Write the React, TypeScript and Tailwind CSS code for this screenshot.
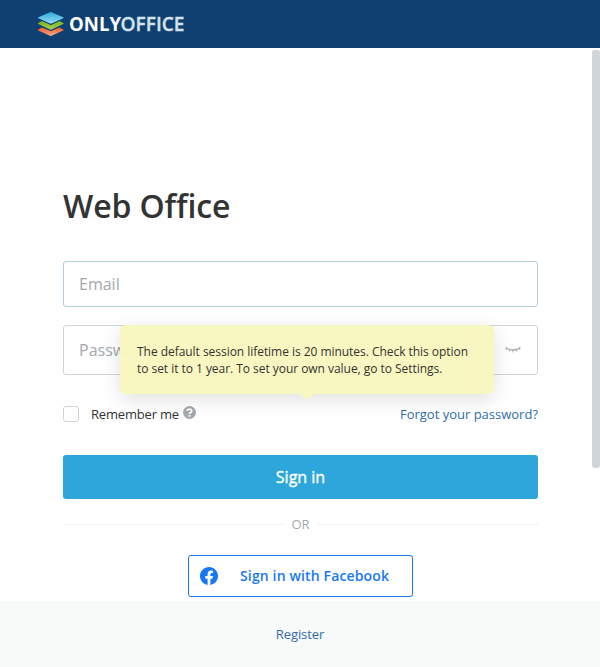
import React from "react";

function Logo() {
  return (
    <svg className="block" width="150" height="28" viewBox="0 0 150 28" role="img" aria-label="ONLYOFFICE">
      <defs>
        <linearGradient id="blueLayer" x1="0" y1="0" x2="0" y2="1">
          <stop offset="0" stopColor="#27a9dc" />
          <stop offset="1" stopColor="#9bdcf5" />
        </linearGradient>
        <linearGradient id="greenLayer" x1="0" y1="0" x2="0" y2="1">
          <stop offset="0" stopColor="#77b51a" />
          <stop offset="1" stopColor="#a9d052" />
        </linearGradient>
        <linearGradient id="redLayer" x1="0" y1="0" x2="0" y2="1">
          <stop offset="0" stopColor="#ee5b2b" />
          <stop offset="1" stopColor="#f3ab8c" />
        </linearGradient>
      </defs>
      <path d="M.4 19.500 4 17.500l8 3.300q.8.400 1.600 0l8-3.300 3.600 2q.8.500 0 .9L13.600 25.800q-.8.400-1.600 0L.4 20.400q-.8-.4 0-.9Z" fill="url(#redLayer)" />
      <path d="M.4 13 4 11l8 3.700q.8.400 1.600 0l8-3.700 3.600 2q.8.400 0 .9l-11.600 5.600q-.8.400-1.600 0L.4 13.900q-.8-.4 0-.9Z" fill="url(#greenLayer)" />
      <path d="M12 2.200q.8-.4 1.600 0l11.600 5.100q.8.400 0 .9l-11.600 5.200q-.8.400-1.600 0L.4 8.200q-.8-.5 0-.9Z" fill="url(#blueLayer)" />
      <g fontFamily="'Open Sans', sans-serif" fontSize="20" strokeLinejoin="round">
        <text x="31" y="21" fontWeight="700" fill="#fff" textLength="52" lengthAdjust="spacingAndGlyphs">ONLY</text>
        <text x="82.500" y="21" fontWeight="600" fill="#d3e3ea" stroke="#d3e3ea" strokeWidth=".35" textLength="64" lengthAdjust="spacingAndGlyphs">OFFICE</text>
      </g>
    </svg>
  );
}

function ClosedEye() {
  return (
    <svg className="block" width="16" height="8" viewBox="0 0 16 8" fill="none" stroke="#a3a9ae">
      <path d="M.5 1.500Q8 6.500 15.500 1.500" strokeWidth="1.300" />
      <path d="M2 2.200.8 4M5 3.500 4.300 5.600M8 4v2.500M11 3.500l.7 2.100M14 2.200 15.200 4" strokeWidth="1" />
    </svg>
  );
}

function HelpIcon() {
  return (
    <svg className="block" width="13" height="13" viewBox="0 0 13 13">
      <circle cx="6.500" cy="6.500" r="6.500" fill="#a3a9ae" />
      <path d="M4.300 5.100C4.300 2.500 8.700 2.500 8.700 5c0 1.500-2.200 1.600-2.200 3.100" fill="none" stroke="#fff" strokeWidth="1.700" />
      <path d="M5.600 9h1.800v1.700H5.600z" fill="#fff" />
    </svg>
  );
}

function FacebookIcon() {
  return (
    <svg className="block" width="18" height="18" viewBox="0 0 24 24" fill="#1877f2">
      <path d="M24 12.073C24 5.446 18.627.073 12 .073S0 5.446 0 12.073c0 5.990 4.388 10.954 10.125 11.854v-8.385H7.078v-3.470h3.047V9.430c0-3.007 1.792-4.669 4.533-4.669 1.312 0 2.686.235 2.686.235v2.953H15.830c-1.491 0-1.956.925-1.956 1.874v2.250h3.328l-.532 3.470h-2.796v8.385C19.612 23.027 24 18.063 24 12.073z" />
    </svg>
  );
}

function SessionTooltip() {
  return (
    <div role="tooltip" className="absolute left-[57px] top-[64px] h-[69px] w-[374px] rounded-md bg-[#f8f7bf]/97 px-[17px] pt-[18px] text-xs leading-[17px] tracking-[-0.04px] text-[#333] shadow-[0_5px_20px_rgba(0,0,0,0.13)]">
      <p className="whitespace-nowrap">The default session lifetime is 20 minutes. Check this option</p>
      <p className="whitespace-nowrap">to set it to 1 year. To set your own value, go to Settings.</p>
      <svg className="absolute left-[180px] top-[69px]" width="14" height="6" viewBox="0 0 14 6">
        <path d="M0 0h14L8 5Q7 6 6 5Z" fill="#f8f7bf" />
      </svg>
    </div>
  );
}

export default function App() {
  return (
    <div className="flex h-[667px] w-[600px] flex-col overflow-hidden bg-white font-['Open_Sans','Noto_Sans',sans-serif] text-[13px] text-[#333]">
      <header className="h-12 shrink-0 bg-[#0f4071] pl-[38px] pt-[10px]">
        <Logo />
      </header>
      <div className="flex h-[553px] shrink-0 justify-between">
        <main className="ml-[63px] w-[475px] pt-[135px]">
          <h1 className="h-[78px] text-[32px] font-semibold leading-[45px] tracking-[-0.12px]">Web Office</h1>
          <form className="relative" onSubmit={(event) => event.preventDefault()}>
            <input aria-label="Email" placeholder="Email" className="block h-[46px] w-full rounded-[3px] border border-[#b5cbd8] px-[15px] text-base outline-none placeholder:text-[#a3a9ae]" />
            <div className="mt-[18px] flex h-[50px] items-center rounded-[3px] border border-[#d0d5da] pl-[15px] pr-4">
              <input type="password" aria-label="Password" placeholder="Password" className="h-full min-w-0 flex-1 text-base outline-none placeholder:text-[#a3a9ae]" />
              <ClosedEye />
            </div>
            <div className="mt-[30px] flex h-[18px] items-center">
              <input type="checkbox" aria-label="Remember me" className="size-4 appearance-none rounded-[3px] border border-[#d0d5da]" />
              <span className="ml-3 leading-[18px] tracking-[-0.18px]">Remember me</span>
              <button type="button" aria-label="Help" className="mb-[3px] ml-1"><HelpIcon /></button>
              <a href="#password" className="ml-auto leading-[18px] text-[#316daa]">Forgot your password?</a>
            </div>
            <button type="submit" className="mt-8 block h-11 w-full rounded-[3px] bg-[#2da7db] text-base text-white [-webkit-text-stroke:0.35px_white]">Sign in</button>
            <SessionTooltip />
          </form>
          <div className="mt-4 flex h-[18px] items-center text-[#a3a9ae]">
            <span className="h-px flex-1 bg-[#eceef1]" />
            <span className="mx-2 text-[13px] leading-[18px]">OR</span>
            <span className="h-px flex-1 bg-[#eceef1]" />
          </div>
          <button type="button" className="ml-[125px] mt-[22px] flex h-[42px] w-[225px] items-center rounded-[3px] border border-[#1877f2] pl-[11px] text-sm font-semibold tracking-[0.14px] text-[#1877f2]">
            <FacebookIcon />
            <span className="ml-[22px]">Sign in with Facebook</span>
          </button>
        </main>
        <div className="mt-[2px] h-[418px] w-2 rounded-[3px] bg-[#d0d5da]" />
      </div>
      <footer className="flex h-[66px] shrink-0 items-center justify-center bg-[#f8f9f9]">
        <a href="#register" className="pt-[2px] tracking-[-0.08px] text-[#316daa]">Register</a>
      </footer>
    </div>
  );
}
